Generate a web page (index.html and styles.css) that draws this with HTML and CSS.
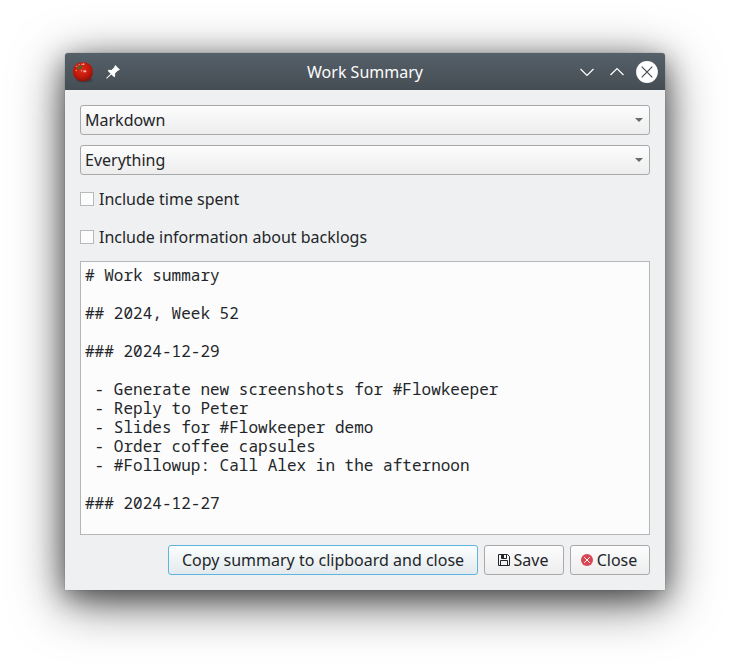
FILE: index.html
```html
<!DOCTYPE html>
<html lang="en">
<head>
<meta charset="utf-8">
<title>Work Summary</title>
<link rel="stylesheet" href="styles.css">
</head>
<body>
<main class="window">
  <header class="titlebar">
    <div class="title-left">
      <svg width="22" height="22" viewBox="0 0 22 22">
        <defs>
          <radialGradient id="tomato" cx="45%" cy="38%" r="62%">
            <stop offset="0" stop-color="#e02a18"/>
            <stop offset="0.6" stop-color="#c41a0c"/>
            <stop offset="1" stop-color="#8c1209"/>
          </radialGradient>
        </defs>
        <ellipse cx="12.500" cy="19" rx="8.500" ry="2.600" fill="#252a2e" opacity=".4"/>
        <path d="M1 10.500C1 4.500 5 1.200 11 1.200S20.800 5 20.800 11 17 20.400 11.200 20.400 1 16.500 1 10.500Z" fill="url(#tomato)"/>
        <path d="M4 6Q6.500 2.800 11 3.500M3.500 9.300 5 9.600" fill="none" stroke="#e89c86" stroke-width="1.200" stroke-dasharray="1.800 1.300" opacity=".8"/>
        <path d="M4.500 7 7 5.500 7 4 8.500 5 11 4.800 9.500 6.300 9.800 8.200 7.800 7.400 6 8.500Z" fill="#4e622a"/>
        <circle cx="11.500" cy="3.200" r=".9" fill="#f5b0a5"/>
        <ellipse cx="12.800" cy="10.300" rx="1.700" ry="1.100" fill="#f4b2a5"/>
        <circle cx="9.500" cy="9.800" r=".7" fill="#f09a88"/>
      </svg>
      <svg width="14" height="14" viewBox="0 0 14 14">
        <path d="M9.200 0 14 4.800 12.600 5.600 12 5.500 9 8.500 9.200 11.300 8.200 12.300 5.300 9.400.8 13.700.2 13.100 4.600 8.700 1.700 5.800 2.700 4.800 5.500 5 8.500 2 8.400 1.400Z" fill="#fff"/>
      </svg>
    </div>
    <h1 class="title">Work Summary</h1>
    <div class="title-right">
      <svg width="82" height="22" viewBox="0 0 82 22" fill="none" stroke-width="1.200">
        <path d="M4.500 8 11 14.500 17.500 8M34.500 14 41 7.500 47.500 14" stroke="#fff"/>
        <circle cx="71" cy="11" r="10.900" fill="#fff"/>
        <path d="M65.700 5.700 76.300 16.300M76.300 5.700 65.700 16.300" stroke="#414b53"/>
      </svg>
    </div>
  </header>
  <section class="content">
    <div class="combo"><span>Markdown</span><i class="arrow"></i></div>
    <div class="combo"><span>Everything</span><i class="arrow"></i></div>
    <label class="check"><input type="checkbox" class="box">Include time spent</label>
    <label class="check second"><input type="checkbox" class="box">Include information about backlogs</label>
    <pre class="summary"># Work summary

## 2024, Week 52

### 2024-12-29

 - Generate new screenshots for #Flowkeeper
 - Reply to Peter
 - Slides for #Flowkeeper demo
 - Order coffee capsules
 - #Followup: Call Alex in the afternoon

### 2024-12-27
</pre>
    <footer class="actions">
      <button class="btn primary">Copy summary to clipboard and close</button>
      <button class="btn small">
        <svg width="12" height="12" viewBox="0 0 12 12" fill="none" stroke="#232629">
          <path d="M.5.5H9.500L11.500 2.500V11.500H.5ZM2.500 11.500V6.500H9.500V11.500M3.500.5V4.500H8.500V.5"/>
          <path d="M4 1H6V4H4Z" fill="#232629" stroke="none"/>
        </svg>Save</button>
      <button class="btn small">
        <svg width="12" height="12" viewBox="0 0 12 12">
          <circle cx="6" cy="6" r="6" fill="#da4453"/>
          <path d="M3.200 3.200 8.800 8.800M8.800 3.200 3.200 8.800" stroke="#fff"/>
        </svg>Close</button>
    </footer>
  </section>
</main>
</body>
</html>
```
FILE: styles.css
```css
* { box-sizing: border-box; }
body {
  margin: 0;
  padding: 53px 65px 0;
  height: 667px;
  overflow: hidden;
  background: #fff;
  color: #232629;
  font: 16px/22px "Noto Sans", sans-serif;
}
svg { display: block; flex: none; }
.window {
  width: 600px;
  height: 537px;
  display: flex;
  flex-direction: column;
  background: #eff0f1;
  border-radius: 4px 4px 0 0;
  box-shadow: 0 0 1px rgba(0,0,0,.5), 0 12px 52px rgba(0,0,0,.62), 0 7px 26px rgba(0,0,0,.42);
}
.titlebar {
  height: 37px;
  display: grid;
  grid-template-columns: 1fr auto 1fr;
  align-items: center;
  padding: 0 7px;
  border-radius: 3px 3px 0 0;
  background: linear-gradient(#566069, #454d54);
  color: #fcfcfc;
}
.title-left { display: flex; align-items: center; gap: 12px; }
.title-right { display: flex; justify-content: flex-end; }
.title { margin: 0; font-size: 16px; font-weight: 400; line-height: 22px; }
.content {
  flex: 1;
  display: flex;
  flex-direction: column;
  padding: 15px;
}
.combo, .btn {
  height: 30px;
  border: 1px solid #a8a9aa;
  border-radius: 3px;
  background: linear-gradient(#fdfdfd, #ededed);
}
.combo {
  display: flex;
  align-items: center;
  justify-content: space-between;
  margin-bottom: 10px;
  padding: 0 6px 0 4px;
}
.arrow {
  border: 4px solid transparent;
  border-top-color: #686a6c;
  border-bottom: 0;
}
.check {
  display: flex;
  align-items: center;
  gap: 5px;
  height: 28px;
}
.check.second { margin: 10px 0 10px; }
.box {
  appearance: none;
  width: 14px;
  height: 14px;
  margin: 0;
  border: 1px solid #b8b9ba;
  background: #fcfcfc;
}
.summary {
  flex: 1;
  min-height: 0;
  margin: 0 0 10px;
  padding: 4px;
  overflow: hidden;
  border: 1px solid #b5b6b7;
  background: #fcfcfc;
  font: 16px/19px "Noto Sans Mono", "DejaVu Sans Mono", monospace;
  letter-spacing: .015px;
}
.actions { display: flex; justify-content: flex-end; gap: 6px; }
.btn {
  display: flex;
  align-items: center;
  justify-content: center;
  gap: 4px;
  padding: 0;
  color: inherit;
  font: inherit;
}
.primary {
  width: 310px;
  border-color: #5eb5e0;
  background: linear-gradient(#fdfefe, #e2e9ed);
}
.small { width: 80px; padding-right: 2px; }
```
